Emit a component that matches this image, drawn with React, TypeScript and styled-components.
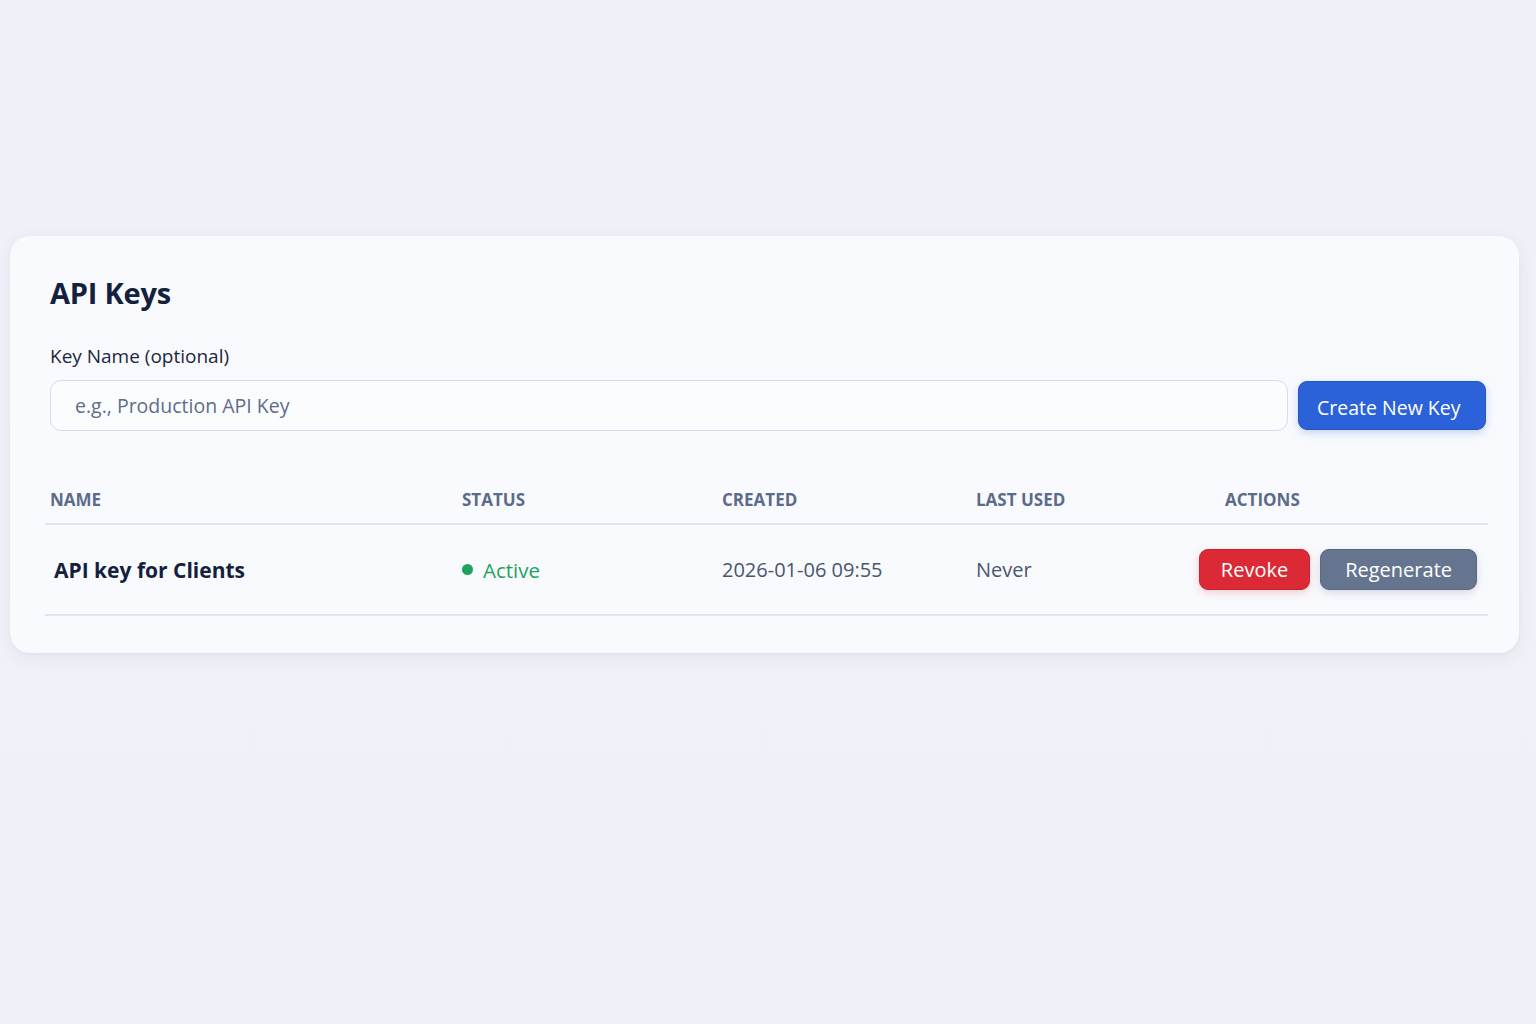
import React from "react";
import styled, { createGlobalStyle } from "styled-components";

const Global = createGlobalStyle`
  html, body { margin: 0; padding: 0; }
  body {
    background: #eef1f8;
    font-family: "Open Sans", "Noto Sans", "Liberation Sans", sans-serif;
    color: #14213d;
  }
  * { box-sizing: border-box; }
`;

const Page = styled.div`
  min-height: 1024px;
  padding: 236px 17px 0 10px;
  background: linear-gradient(180deg, #eef1f8 0%, #f0f2f8 50%, #eef1f8 100%);
`;

const Card = styled.section`
  background: #f9fafd;
  border-radius: 20px;
  box-shadow: 0 4px 18px rgba(40, 60, 110, 0.07), 0 1px 3px rgba(40, 60, 110, 0.04);
  padding: 38px 33px 37px 40px;
`;

const Title = styled.h1`
  margin: 0 0 31px;
  font-size: 29px;
  line-height: 38px;
  font-weight: 700;
  color: #14213d;
  letter-spacing: -0.2px;
`;

const Label = styled.label`
  display: block;
  font-size: 19px;
  line-height: 26px;
  color: #1c2740;
  margin-bottom: 11px;
`;

const FormRow = styled.div`
  display: flex;
  gap: 10px;
  align-items: center;
`;

const Input = styled.input`
  flex: 1;
  height: 51px;
  border: 1.5px solid #d3dcf0;
  border-radius: 11px;
  background: #fbfcfe;
  padding: 0 24px;
  font-family: inherit;
  font-size: 19.5px;
  color: #1c2740;
  outline: none;
  &::placeholder { color: #5f6d86; }
`;

const Button = styled.button<{ $variant: "primary" | "danger" | "muted" }>`
  font-family: inherit;
  color: #fff;
  cursor: pointer;
  border-radius: 9px;
  background: ${(p) =>
    p.$variant === "primary" ? "#2c62d9" : p.$variant === "danger" ? "#db2a35" : "#66758f"};
  border: 1px solid ${(p) =>
    p.$variant === "primary" ? "#2657c8" : p.$variant === "danger" ? "#c7222d" : "#5a6882"};
  box-shadow: 0 3px 8px ${(p) =>
    p.$variant === "primary" ? "rgba(44,98,217,0.25)" : p.$variant === "danger" ? "rgba(219,42,53,0.2)" : "rgba(80,95,125,0.2)"};
`;

const CreateButton = styled(Button)`
  height: 49px;
  width: 188px;
  padding: 3px 0 0 18px;
  text-align: left;
  font-size: 19.5px;
  white-space: nowrap;
`;

const Table = styled.div`
  margin: 47px -2px 0 -5px;
`;

const Row = styled.div<{ $head?: boolean }>`
  display: grid;
  grid-template-columns: 412px 260px 254px 249px 1fr;
  align-items: center;
  height: ${(p) => (p.$head ? "47px" : "91px")};
  border-bottom: 2px solid #e1e5ee;
  padding-left: 5px;
`;

const Th = styled.div`
  font-size: 17px;
  font-weight: 700;
  color: #5b6b8b;
  text-transform: uppercase;
  padding-bottom: 2px;
`;

const NameCell = styled.div`
  font-size: 21px;
  font-weight: 700;
  color: #14213d;
  padding-left: 4px;
`;

const Status = styled.div`
  display: flex;
  align-items: center;
  gap: 10px;
  font-size: 20.5px;
  color: #1ea35c;
`;

const Dot = styled.span`
  width: 11px;
  height: 11px;
  border-radius: 50%;
  background: #1ea35c;
`;

const TextCell = styled.div`
  font-size: 20px;
  color: #4a5670;
`;

const Actions = styled.div`
  display: flex;
  justify-content: flex-end;
  gap: 10px;
  padding-right: 11px;
  min-width: 0;
`;

const ActionButton = styled(Button)<{ $pad: number }>`
  flex-shrink: 0;
  height: 41px;
  font-size: 20px;
  padding: 0 ${(p) => p.$pad}px;
`;

export default function App() {
  return (
    <>
      <Global />
      <Page>
        <Card>
          <Title>API Keys</Title>
          <Label>Key Name (optional)</Label>
          <FormRow>
            <Input placeholder="e.g., Production API Key" />
            <CreateButton $variant="primary">Create New Key</CreateButton>
          </FormRow>
          <Table>
            <Row $head>
              <Th>Name</Th>
              <Th>Status</Th>
              <Th>Created</Th>
              <Th>Last Used</Th>
              <Th>Actions</Th>
            </Row>
            <Row>
              <NameCell>API key for Clients</NameCell>
              <Status>
                <Dot />
                Active
              </Status>
              <TextCell>2026-01-06 09:55</TextCell>
              <TextCell>Never</TextCell>
              <Actions>
                <ActionButton $variant="danger" $pad={21}>Revoke</ActionButton>
                <ActionButton $variant="muted" $pad={24}>Regenerate</ActionButton>
              </Actions>
            </Row>
          </Table>
        </Card>
      </Page>
    </>
  );
}
